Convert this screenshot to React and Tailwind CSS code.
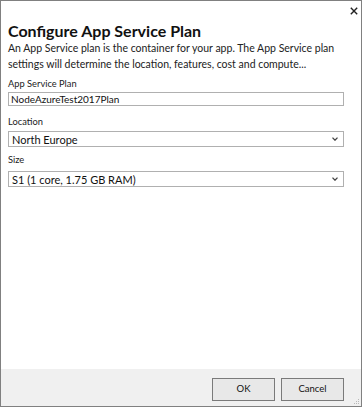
import React from "react";

const Chevron = () => (
  <svg width="6" height="4" viewBox="0 0 6 4" className="text-[#444]">
    <path d="M0.5 0.6 L3 3.2 L5.5 0.6" fill="none" stroke="currentColor" strokeWidth="1.3" />
  </svg>
);

const CloseIcon = () => (
  <svg width="8" height="8" viewBox="0 0 8 8" className="text-[#222]">
    <path d="M0.8 0.8 L7.2 7.2 M7.2 0.8 L0.8 7.2" stroke="currentColor" strokeWidth="1.4" />
  </svg>
);

const Select = ({ value }) => (
  <div className="flex items-center justify-between h-[16px] border border-[#b0b0b0] bg-white pl-[3px] pr-[5px] text-[11px] leading-none text-[#111]">
    <span>{value}</span>
    <Chevron />
  </div>
);

export default function App() {
  return (
    <div
      className="relative w-[362px] h-[407px] border border-[#808080] bg-white flex flex-col"
      style={{ fontFamily: 'Lato, "Noto Sans", sans-serif' }}
    >
      <div className="h-[20px] flex items-center justify-end pr-[3px]">
        <CloseIcon />
      </div>
      <div className="flex-1 pl-[7px] pr-[17px]">
        <h1 className="text-[16px] font-bold leading-[19px] text-[#111]">Configure App Service Plan</h1>
        <p className="text-[10.5px] leading-[16px] text-[#222]">
          An App Service plan is the container for your app. The App Service plan settings will determine the location, features, cost and compute...
        </p>

        <div className="mt-[6px] text-[9.3px] leading-[12px] text-[#222]">App Service Plan</div>
        <div className="mt-[2px] h-[14px] border border-[#b0b0b0] pl-[2px] text-[10px] leading-[12px] text-[#111]">
          NodeAzureTest2017Plan
        </div>

        <div className="mt-[10px] text-[9.3px] leading-[12px] text-[#222]">Location</div>
        <div className="mt-[3px]">
          <Select value="North Europe" />
        </div>

        <div className="mt-[7px] text-[9.3px] leading-[12px] text-[#222]">Size</div>
        <div className="mt-[5px]">
          <Select value="S1 (1 core, 1.75 GB RAM)" />
        </div>
      </div>
      <div className="h-[37px] bg-[#f0f0f0] flex items-start justify-end gap-[6px] pt-[9px] pr-[17px]">
        <button className="w-[63px] h-[23px] border border-[#7a7a7a] bg-[#e8e8e8] text-[9.5px] text-[#111]">OK</button>
        <button className="w-[63px] h-[23px] border border-[#7a7a7a] bg-[#e8e8e8] text-[9.5px] text-[#111]">Cancel</button>
      </div>
      <svg width="6" height="6" viewBox="0 0 6 6" className="absolute right-[1px] bottom-[1px] text-[#b8b8b8]">
        <rect x="4" y="0" width="1" height="1" fill="currentColor" />
        <rect x="2" y="2" width="1" height="1" fill="currentColor" />
        <rect x="4" y="2" width="1" height="1" fill="currentColor" />
        <rect x="0" y="4" width="1" height="1" fill="currentColor" />
        <rect x="2" y="4" width="1" height="1" fill="currentColor" />
        <rect x="4" y="4" width="1" height="1" fill="currentColor" />
      </svg>
    </div>
  );
}
